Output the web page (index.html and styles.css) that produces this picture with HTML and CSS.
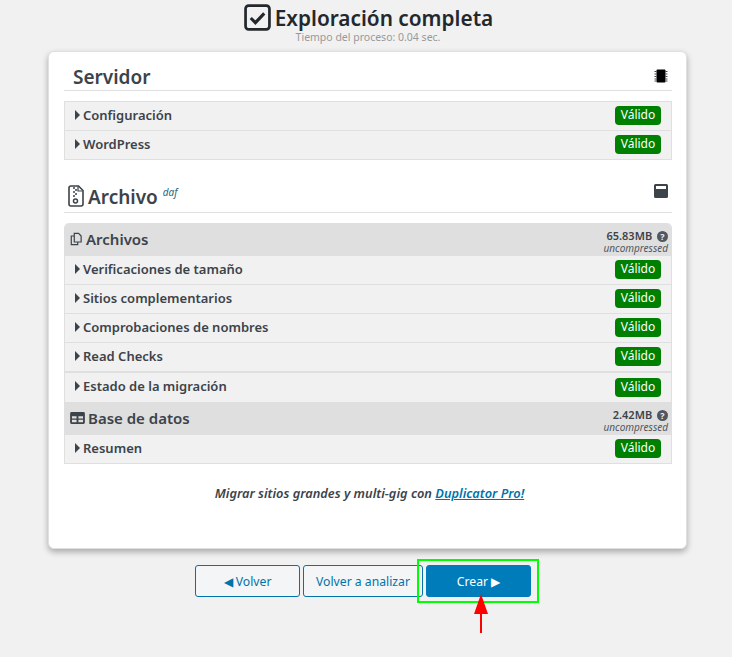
FILE: index.html
```html
<!DOCTYPE html>
<html lang="en">
<head>
    <meta charset="UTF-8">
    <title>Exploración completa</title>
    <link rel="stylesheet" href="styles.css">
</head>
<body>
    <header class="page-head">
        <h1>
            <svg class="head-icon" viewBox="0 0 26 26"><rect x="1.500" y="1.500" width="23" height="23" rx="3" fill="none" stroke="#23282d" stroke-width="2.600"/><path d="M6.500 13.500l4.500 4.500 8.500-9" fill="none" stroke="#23282d" stroke-width="3"/></svg>
            Exploración completa
        </h1>
        <p class="process-time">Tiempo del proceso: 0.04 sec.</p>
    </header>

    <main class="card">
        <div class="section-head server-head">
            <h2>Servidor</h2>
            <svg class="side-icon" viewBox="0 0 14 14"><rect x="2.500" y="0.500" width="9" height="13" rx="1" fill="#000"/><path d="M0.500 2.500h2M0.500 5h2M0.500 7.500h2M0.500 10h2M0.500 12h2M11.500 2.500h2M11.500 5h2M11.500 7.500h2M11.500 10h2M11.500 12h2" stroke="#3c434a" stroke-width="1"/></svg>
        </div>
        <div class="box">
            <div class="row"><span class="row-title">Configuración</span><span class="badge">Válido</span></div>
            <div class="row"><span class="row-title">WordPress</span><span class="badge">Válido</span></div>
        </div>

        <div class="section-head archive-head">
            <h2>
                <svg class="zip-icon" viewBox="0 0 16 22"><path d="M1 3a2 2 0 0 1 2-2h7.500l4.500 4.500V19a2 2 0 0 1-2 2H3a2 2 0 0 1-2-2z" fill="#fff" stroke="#3c434a" stroke-width="1.600"/><path d="M10 1.500v4.500h4.500" fill="none" stroke="#3c434a" stroke-width="1.200"/><path d="M6 2v2M8 4v2M6 6v2M8 8v2M6 10v2" stroke="#3c434a" stroke-width="1.500"/><circle cx="7.500" cy="16" r="2" fill="none" stroke="#3c434a" stroke-width="1.500"/></svg>
                Archivo <sup class="engine">daf</sup>
            </h2>
            <svg class="side-icon archive-icon" viewBox="0 0 14 14"><path d="M1.500 0h11A1.500 1.500 0 0 1 14 1.500V12.500A1.500 1.500 0 0 1 12.500 14H1.500A1.500 1.500 0 0 1 0 12.500V1.500A1.500 1.500 0 0 1 1.500 0zM2 2v3h10V2z" fill="#3c434a" fill-rule="evenodd"/></svg>
        </div>
        <div class="box">
            <div class="group first-group">
                <span class="group-title">
                    <svg class="group-icon" viewBox="0 0 14 15"><path d="M5 1h5l3 3v7H5zM5 4H1.500v10H9v-3" fill="none" stroke="#3c434a" stroke-width="1.400"/></svg>
                    Archivos
                </span>
                <span class="size"><b>65.83MB <i class="help">?</i></b><em>uncompressed</em></span>
            </div>
            <div class="row"><span class="row-title">Verificaciones de tamaño</span><span class="badge">Válido</span></div>
            <div class="row"><span class="row-title">Sitios complementarios</span><span class="badge">Válido</span></div>
            <div class="row"><span class="row-title">Comprobaciones de nombres</span><span class="badge">Válido</span></div>
            <div class="row"><span class="row-title">Read Checks</span><span class="badge">Válido</span></div>
            <div class="row migration"><span class="row-title">Estado de la migración</span><span class="badge">Válido</span></div>
            <div class="group">
                <span class="group-title">
                    <svg class="group-icon table-icon" viewBox="0 0 16 13"><path d="M1.500 0h13A1.500 1.500 0 0 1 16 1.500v10a1.500 1.500 0 0 1-1.500 1.500h-13A1.500 1.500 0 0 1 0 11.500v-10A1.500 1.500 0 0 1 1.500 0zM2 4.500v2.500h5V4.500zM9 4.500v2.500h5V4.500zM2 8.500v2.500h5V8.500zM9 8.500v2.500h5V8.500z" fill="#3c434a" fill-rule="evenodd"/></svg>
                    Base de datos
                </span>
                <span class="size"><b>2.42MB <i class="help">?</i></b><em>uncompressed</em></span>
            </div>
            <div class="row last-row"><span class="row-title">Resumen</span><span class="badge">Válido</span></div>
        </div>

        <p class="promo">Migrar sitios grandes y multi-gig con <a href="#">Duplicator Pro!</a></p>
    </main>

    <div class="actions">
        <button class="btn">◀ Volver</button>
        <button class="btn rescan">Volver a analizar</button>
        <span class="highlight">
            <button class="btn primary">Crear ▶</button>
            <svg class="arrow" viewBox="0 0 14 39"><path d="M7 0l7 20H8v19H6V20H0z" fill="#f00"/></svg>
        </span>
    </div>
</body>
</html>
```

FILE: styles.css
```css
* {
    margin: 0;
    padding: 0;
    box-sizing: border-box;
}

body {
    min-height: 100vh;
    background: #f1f1f1;
    color: #3c434a;
    font-family: "Noto Sans", sans-serif;
    font-size: 13px;
}

.page-head {
    height: 51px;
    text-align: center;
    padding-left: 5px;
    padding-top: 3px;
}

.page-head h1 {
    display: flex;
    align-items: center;
    justify-content: center;
    gap: 4px;
    color: #23282d;
    font-size: 20.800px;
    line-height: 30px;
    font-weight: 600;
}

.head-icon {
    width: 27px;
    height: 27px;
    margin-top: -2px;
}

.process-time {
    color: #999;
    font-size: 10.500px;
    line-height: 11px;
    margin-top: -1px;
    margin-left: -1px;
}

.card {
    width: 639px;
    height: 498px;
    margin-left: 48px;
    background: #fff;
    border: 1px solid #e0e0e0;
    border-radius: 6px;
    box-shadow: 0 3px 6px rgba(0, 0, 0, 0.3);
    padding: 0 14px 0 15px;
}

.section-head {
    display: flex;
    justify-content: space-between;
    border-bottom: 1px solid #dfdfdf;
}

.server-head {
    height: 39px;
    padding: 12px 4px 0 9px;
}

.archive-head {
    height: 53px;
    padding: 24px 4px 0 4px;
}

h2 {
    display: flex;
    align-items: center;
    color: #3c434a;
    font-size: 19px;
    line-height: 26px;
    font-weight: 600;
    height: 26px;
}

.side-icon {
    width: 14px;
    height: 14px;
    margin-top: 5px;
}

.archive-icon {
    margin-top: 0;
}

.zip-icon {
    width: 16px;
    height: 22px;
    margin-right: 4px;
    margin-top: -2px;
}

.engine {
    font-size: 10px;
    font-weight: 400;
    font-style: italic;
    color: #2c5f7c;
    margin: -10px 0 0 5px;
    line-height: 10px;
}

.box {
    margin-top: 10px;
    border: 1px solid #dfdfdf;
    border-top-width: 0;
    border-radius: 5px 5px 0 0;
    background: #f1f1f1;
}

.server-head + .box {
    border-top-width: 1px;
    border-radius: 0;
}

.row {
    display: flex;
    align-items: center;
    justify-content: space-between;
    height: 29px;
    padding: 0 10px 1px 10px;
    border-bottom: 1px solid #dfdfdf;
}

.server-head + .box .row:last-child,
.last-row {
    border-bottom: 0;
    height: 28px;
}

.migration {
    height: 30px;
    border-top: 1px solid #dfdfdf;
    border-bottom: 0;
}

.row-title {
    margin-top: -2px;
    font-size: 13px;
    font-weight: 600;
}

.row-title::before {
    content: "";
    display: inline-block;
    border-left: 5px solid #3c434a;
    border-top: 5px solid transparent;
    border-bottom: 5px solid transparent;
    margin-right: 3px;
}

.badge {
    width: 46px;
    height: 19px;
    background: #008000;
    border-radius: 4px;
    color: #fff;
    font-size: 12px;
    line-height: 18px;
    text-align: center;
}

.group {
    display: flex;
    align-items: center;
    justify-content: space-between;
    height: 33px;
    padding: 0 3px 0 5px;
    background: #dfdfdf;
}

.first-group {
    border-radius: 5px 5px 0 0;
}

.group-title {
    display: flex;
    align-items: center;
    gap: 4px;
    margin-top: -2px;
    font-size: 15px;
    font-weight: 600;
}

.group-icon {
    width: 12px;
    height: 14px;
}

.table-icon {
    width: 15px;
    height: 12px;
    margin-right: -1px;
}

.size {
    display: flex;
    flex-direction: column;
    align-items: flex-end;
    padding-top: 3px;
    font-size: 11px;
    line-height: 13px;
}

.size b {
    font-weight: 600;
    height: 13px;
}

.size em {
    font-size: 10px;
    line-height: 12px;
    color: #50575e;
}

.help {
    display: inline-block;
    width: 11px;
    height: 11px;
    margin-left: 2px;
    border-radius: 50%;
    background: #50575e;
    color: #f1f1f1;
    font-size: 9px;
    line-height: 11px;
    font-style: normal;
    font-weight: 700;
    text-align: center;
}

.promo {
    margin-top: 20px;
    padding-left: 3px;
    text-align: center;
    font-size: 12.800px;
    font-weight: 600;
    font-style: italic;
}

.promo a {
    color: #0073aa;
}

.actions {
    display: flex;
    gap: 3px;
    margin: 16px 0 0 195px;
}

.btn {
    width: 105px;
    height: 32px;
    border: 1px solid #0073aa;
    border-radius: 3px;
    background: #f3f5f6;
    color: #0073aa;
    font-family: "Noto Sans", sans-serif;
    font-size: 12.200px;
}

.rescan {
    width: 120px;
}

.primary {
    background: #007cba;
    border-color: #007cba;
    color: #fff;
}

.highlight {
    position: relative;
    height: 32px;
}

.highlight::before {
    content: "";
    position: absolute;
    top: -6px;
    left: -9px;
    width: 122px;
    height: 44px;
    box-sizing: border-box;
    border: 2px solid #0f0;
}

.arrow {
    position: absolute;
    top: 29px;
    left: 48px;
    width: 14px;
    height: 39px;
}
```
